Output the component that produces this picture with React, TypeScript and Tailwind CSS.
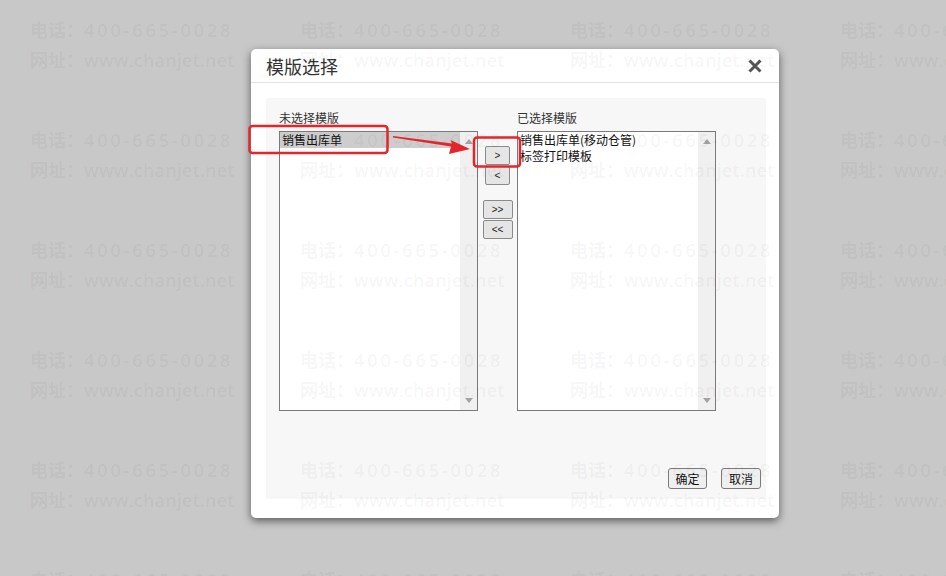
import React from 'react';

const ui = '"Noto Sans CJK SC", "Noto Sans", sans-serif';
const mark = '"Open Sans", "Noto Sans CJK SC", sans-serif';

function Watermark() {
  const tiles = Array.from({ length: 24 });
  return (
    <div className="pointer-events-none absolute inset-0 overflow-hidden">
      <div className="flex w-[1200px] flex-wrap pl-[30px] pt-[15px]">
        {tiles.map((_, i) => (
          <div
            key={i}
            className="h-[110px] w-[270px] whitespace-nowrap text-[18px] font-semibold leading-[30px] text-black/[0.05]"
            style={{ fontFamily: mark }}
          >
            <div>
              电话：<span className="tracking-[2.9px]">400-665-0028</span>
            </div>
            <div>
              网址：<span className="tracking-[0.2px]">www.chanjet.net</span>
            </div>
          </div>
        ))}
      </div>
    </div>
  );
}

function ScrollTrack() {
  return (
    <div className="flex w-[17px] flex-col items-center justify-between bg-[#f0f0f0] py-[7px]">
      <svg width="8" height="5" viewBox="0 0 8 5">
        <path d="M0 5 L4 0 L8 5 Z" fill="#a3a3a3" />
      </svg>
      <svg width="8" height="5" viewBox="0 0 8 5">
        <path d="M0 0 L8 0 L4 5 Z" fill="#a3a3a3" />
      </svg>
    </div>
  );
}

function ListBox({ items, selected }: { items: string[]; selected?: number }) {
  return (
    <div className="flex h-[280px] w-[199px] border border-[#7a7a7a] bg-white">
      <div className="flex-1">
        {items.map((it, i) => (
          <div
            key={it}
            className={`h-[16px] whitespace-nowrap pl-[2px] text-[12px] leading-[16px] text-[#111] ${
              i === selected ? 'bg-[#cdcdcd]' : ''
            }`}
          >
            {it}
          </div>
        ))}
      </div>
      <ScrollTrack />
    </div>
  );
}

function MoveButton({ label, wide }: { label: string; wide?: boolean }) {
  return (
    <button
      className={`flex h-[19px] items-center justify-center rounded-[2px] border border-[#8a8a8a] bg-[#e5e5e5] text-[10px] leading-none text-[#222] ${
        wide ? 'w-[30px]' : 'w-[25px]'
      }`}
      style={{ fontFamily: '"Liberation Sans", sans-serif' }}
    >
      {label}
    </button>
  );
}

export default function App() {
  return (
    <div
      className="relative h-[576px] w-[946px] overflow-hidden bg-[#c8c8c8] pl-[251px] pt-[49px]"
      style={{ fontFamily: ui }}
    >
      <div className="h-[469px] w-[528px] rounded-[5px] bg-white shadow-[0_3px_9px_rgba(0,0,0,0.55)]">
        <div className="flex h-[34px] items-center justify-between border-b border-[#e3e3e3] pl-[15px] pr-[17px]">
          <span className="text-[18px] leading-none text-[#333]">模版选择</span>
          <svg width="14" height="14" viewBox="0 0 14 14">
            <path d="M1.5 1.5 L12.5 12.5 M12.5 1.5 L1.5 12.5" stroke="#555" strokeWidth="3" />
          </svg>
        </div>

        <div className="ml-[15px] mt-[15px] flex h-[401px] w-[500px] flex-col bg-[#f7f7f7] pl-[13px] pr-[5px] pt-[12px]">
          <div className="flex">
            <div className="flex flex-col">
              <div className="mb-[5px] h-[16px] text-[12px] leading-[16px] text-[#333]">未选择模版</div>
              <ListBox items={['销售出库单']} selected={0} />
            </div>
            <div className="flex w-[39px] flex-col items-center pt-[36px]">
              <MoveButton label=">" />
              <div className="mt-[1px]">
                <MoveButton label="<" />
              </div>
              <div className="mt-[15px]">
                <MoveButton label=">>" wide />
              </div>
              <div className="mt-[1px]">
                <MoveButton label="<<" wide />
              </div>
            </div>
            <div className="flex flex-col">
              <div className="mb-[5px] h-[16px] text-[12px] leading-[16px] text-[#333]">已选择模版</div>
              <ListBox items={['销售出库单(移动仓管)', '标签打印模板']} />
            </div>
          </div>

          <div className="mt-[57px] flex justify-end gap-[14px]">
            <button className="h-[21px] w-[39px] rounded-[3px] border border-[#7a7a7a] bg-[#efefef] text-[12px] leading-none text-[#111]">
              确定
            </button>
            <button className="h-[21px] w-[40px] rounded-[3px] border border-[#7a7a7a] bg-[#efefef] text-[12px] leading-none text-[#111]">
              取消
            </button>
          </div>
        </div>
      </div>

      <Watermark />

      <svg className="pointer-events-none absolute left-0 top-0" width="946" height="576" viewBox="0 0 946 576">
        <rect x="249.5" y="126" width="138" height="27" rx="3" fill="none" stroke="#e3262b" strokeWidth="2.5" />
        <rect x="474" y="137.5" width="46" height="29" rx="3" fill="none" stroke="#e3262b" strokeWidth="2.5" />
        <path d="M393 136 L452 143.5 L450.5 140 L470 149 L449 154 L451 146.5 L393 137.5 Z" fill="#e3262b" />
      </svg>
    </div>
  );
}
